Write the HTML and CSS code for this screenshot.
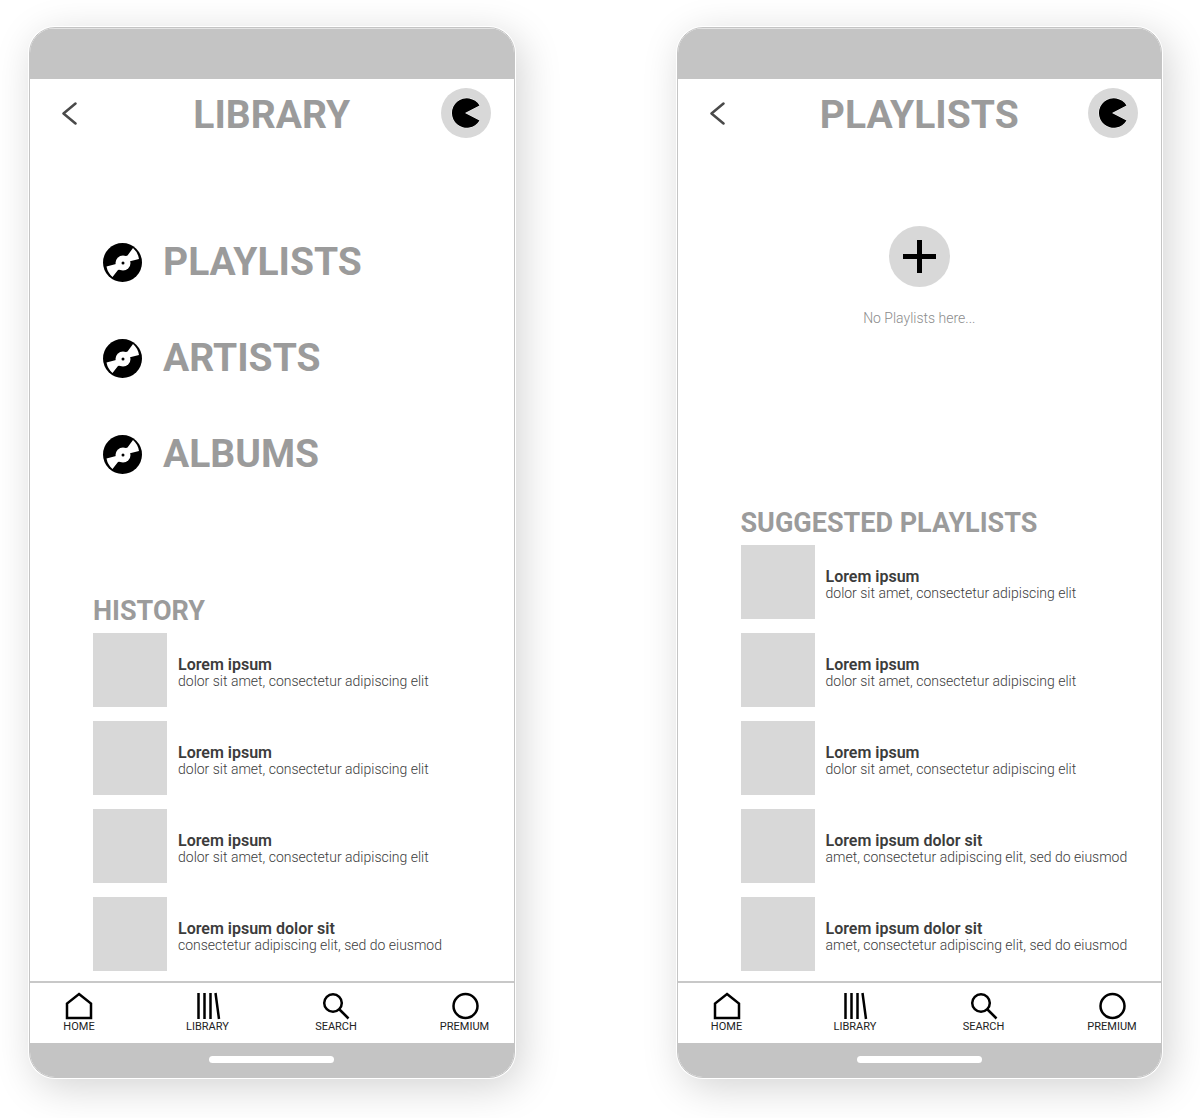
FILE: index.html
```html
<!DOCTYPE html>
<html lang="en">
<head>
<meta charset="utf-8">
<meta name="viewport" content="width=device-width, initial-scale=1">
<title>Music library</title>
<link rel="stylesheet" href="styles.css">
</head>
<body>
<svg class="sprite" aria-hidden="true">
  <symbol id="back" viewBox="0 0 34 24"><path d="M22.500 2.500 10.500 12.500 22.500 22.500"/></symbol>
  <symbol id="avatar" viewBox="0 0 50 50"><path d="M24 25 38.500 17.500A14.800 14.800 0 1 0 38.500 32.500Z" stroke="#fff" stroke-width="1" paint-order="stroke"/></symbol>
  <symbol id="disc" viewBox="0 0 39 39">
    <circle cx="19.500" cy="19.500" r="19.500"/>
    <path class="light" d="M19.500 19.500 23 13 24.500 12.500 30 5A18 18 0 0 1 36 16L26 18.500 19.500 19.500 17 26.500 15 27 9.500 34A18 18 0 0 1 3.500 23.500L13 21Z"/>
    <circle class="light" cx="20" cy="20" r="7.500"/>
    <circle cx="20" cy="20" r="1.500"/>
  </symbol>
  <symbol id="home" viewBox="0 0 28 28"><path d="M14 2 26 11.500V26H2V11.500Z"/></symbol>
  <symbol id="library" viewBox="0 0 28 28"><path d="M4.500 1V27M10.500 1V27M16.500 1V27M21.500 1 25 27"/></symbol>
  <symbol id="search" viewBox="0 0 28 28"><circle cx="11" cy="11" r="8.800"/><path d="M17.500 17.500 26.500 26.500"/></symbol>
  <symbol id="premium" viewBox="0 0 28 28"><circle cx="14.500" cy="14" r="12"/></symbol>
</svg>

<div class="screens">
  <section class="phone">
    <div class="status-bar"></div>
    <header class="top-bar">
      <button class="back" type="button" aria-label="Back"><svg><use href="#back"/></svg></button>
      <h1 class="title">LIBRARY</h1>
      <button class="avatar" type="button" aria-label="Profile"><svg><use href="#avatar"/></svg></button>
    </header>
    <main class="content">
      <nav class="menu" aria-label="Collections">
        <a class="menu-link" href="#"><svg><use href="#disc"/></svg>PLAYLISTS</a>
        <a class="menu-link" href="#"><svg><use href="#disc"/></svg>ARTISTS</a>
        <a class="menu-link" href="#"><svg><use href="#disc"/></svg>ALBUMS</a>
      </nav>
      <section class="feed">
        <h2 class="feed-title">HISTORY</h2>
        <ul class="tracks">
          <li class="track"><div class="cover"></div><div class="info"><h3 class="name">Lorem ipsum</h3><p class="detail">dolor sit amet, consectetur adipiscing elit</p></div></li>
          <li class="track"><div class="cover"></div><div class="info"><h3 class="name">Lorem ipsum</h3><p class="detail">dolor sit amet, consectetur adipiscing elit</p></div></li>
          <li class="track"><div class="cover"></div><div class="info"><h3 class="name">Lorem ipsum</h3><p class="detail">dolor sit amet, consectetur adipiscing elit</p></div></li>
          <li class="track"><div class="cover"></div><div class="info"><h3 class="name">Lorem ipsum dolor sit</h3><p class="detail">consectetur adipiscing elit, sed do eiusmod</p></div></li>
        </ul>
      </section>
    </main>
    <nav class="tabs" aria-label="Main">
      <a class="tab" href="#"><svg><use href="#home"/></svg>HOME</a>
      <a class="tab" href="#"><svg><use href="#library"/></svg>LIBRARY</a>
      <a class="tab" href="#"><svg><use href="#search"/></svg>SEARCH</a>
      <a class="tab" href="#"><svg><use href="#premium"/></svg>PREMIUM</a>
    </nav>
    <div class="gesture-bar"><span class="handle"></span></div>
  </section>

  <section class="phone">
    <div class="status-bar"></div>
    <header class="top-bar">
      <button class="back" type="button" aria-label="Back"><svg><use href="#back"/></svg></button>
      <h1 class="title">PLAYLISTS</h1>
      <button class="avatar" type="button" aria-label="Profile"><svg><use href="#avatar"/></svg></button>
    </header>
    <main class="content">
      <div class="empty">
        <button class="add" type="button" aria-label="Add playlist"></button>
        <p class="empty-text">No Playlists here...</p>
      </div>
      <section class="feed">
        <h2 class="feed-title">SUGGESTED PLAYLISTS</h2>
        <ul class="tracks">
          <li class="track"><div class="cover"></div><div class="info"><h3 class="name">Lorem ipsum</h3><p class="detail">dolor sit amet, consectetur adipiscing elit</p></div></li>
          <li class="track"><div class="cover"></div><div class="info"><h3 class="name">Lorem ipsum</h3><p class="detail">dolor sit amet, consectetur adipiscing elit</p></div></li>
          <li class="track"><div class="cover"></div><div class="info"><h3 class="name">Lorem ipsum</h3><p class="detail">dolor sit amet, consectetur adipiscing elit</p></div></li>
          <li class="track"><div class="cover"></div><div class="info"><h3 class="name">Lorem ipsum dolor sit</h3><p class="detail">amet, consectetur adipiscing elit, sed do eiusmod</p></div></li>
          <li class="track"><div class="cover"></div><div class="info"><h3 class="name">Lorem ipsum dolor sit</h3><p class="detail">amet, consectetur adipiscing elit, sed do eiusmod</p></div></li>
        </ul>
      </section>
    </main>
    <nav class="tabs" aria-label="Main">
      <a class="tab" href="#"><svg><use href="#home"/></svg>HOME</a>
      <a class="tab" href="#"><svg><use href="#library"/></svg>LIBRARY</a>
      <a class="tab" href="#"><svg><use href="#search"/></svg>SEARCH</a>
      <a class="tab" href="#"><svg><use href="#premium"/></svg>PREMIUM</a>
    </nav>
    <div class="gesture-bar"><span class="handle"></span></div>
  </section>
</div>
</body>
</html>
```

FILE: styles.css
```css
* {
  box-sizing: border-box;
  margin: 0;
  padding: 0;
}

body {
  background: #fff;
  color: #3c3c3c;
  font-family: Roboto, "Liberation Sans", sans-serif;
}

ul {
  list-style: none;
}

a {
  color: inherit;
  text-decoration: none;
}

button {
  border: 0;
  background: none;
  cursor: pointer;
}

svg {
  display: block;
  flex: none;
}

.sprite {
  display: none;
}

.light {
  fill: #fff;
}

.screens {
  display: grid;
  grid-template-columns: 1fr 1fr;
  gap: 162px;
  padding: 27px 38px 40px 29px;
}

.phone {
  display: flex;
  flex-direction: column;
  overflow: hidden;
  border: 1px solid #c4c4c4;
  border-radius: 26px;
  background: #fff;
  box-shadow: 0 0 0 1px #fff, 6px 9px 40px rgba(0, 0, 0, 0.18);
}

.status-bar {
  height: 51px;
  background: #c4c4c4;
  box-shadow: inset 0 1px #e4e4e4;
}

.top-bar {
  display: grid;
  grid-template-columns: 1fr auto 1fr;
  align-items: center;
  padding: 9px 23px 0;
}

.back svg {
  width: 34px;
  height: 24px;
  fill: none;
  stroke: #4a4a4a;
  stroke-width: 2.5;
  stroke-linecap: round;
  stroke-linejoin: round;
}

.title,
.menu-link {
  color: #9b9b9b;
  font-size: 39px;
  font-weight: 700;
  line-height: 40px;
}

.title {
  padding-top: 3px;
}

.avatar {
  justify-self: end;
  border-radius: 50%;
  background: #d8d8d8;
}

.avatar svg {
  width: 50px;
  height: 50px;
}

.content {
  display: flex;
  flex: 1;
  flex-direction: column;
  justify-content: space-between;
  gap: 121px;
  padding: 0 24px 10px 63px;
}

.menu {
  display: grid;
  justify-content: start;
  gap: 56px;
  padding: 104px 10px 0;
}

.menu-link {
  display: flex;
  align-items: center;
  gap: 21px;
}

.menu-link svg {
  width: 39px;
  height: 39px;
}

.empty {
  display: flex;
  flex-direction: column;
  align-items: center;
  gap: 23px;
  padding: 88px 39px 0 0;
}

.add {
  display: grid;
  place-items: center;
  width: 61px;
  height: 61px;
  border-radius: 50%;
  background:
    linear-gradient(#000, #000) center / 33px 5px no-repeat,
    linear-gradient(#000, #000) center / 5px 33px no-repeat,
    #d8d8d8;
}

.empty-text {
  color: #8c8c8c;
  font-size: 14px;
  font-weight: 300;
  line-height: 16px;
}

.feed-title {
  margin-bottom: 6px;
  color: #9b9b9b;
  font-size: 27px;
  line-height: 32px;
}

.tracks {
  display: grid;
  gap: 14px;
}

.track {
  display: flex;
  gap: 11px;
}

.cover {
  flex: none;
  width: 74px;
  height: 74px;
  background: #d8d8d8;
}

.info {
  padding-top: 24px;
}

.name {
  font-size: 16px;
  font-weight: 600;
  line-height: 16px;
}

.detail {
  color: #3c3c3c;
  font-size: 14px;
  font-weight: 300;
  line-height: 16px;
}

.tabs {
  display: flex;
  justify-content: space-between;
  padding: 9px 21px;
  border-top: 2px solid #c8c8c8;
}

.tab {
  display: flex;
  flex-direction: column;
  align-items: center;
  width: 56px;
  color: #222;
  font-size: 11px;
  line-height: 14px;
}

.tab svg {
  width: 28px;
  height: 28px;
  fill: none;
  stroke: #000;
  stroke-width: 2.5;
}

.gesture-bar {
  display: flex;
  justify-content: center;
  padding: 13px 0 14px;
  background: #c4c4c4;
}

.handle {
  width: 125px;
  height: 7px;
  border-radius: 4px;
  background: #fff;
}
```
